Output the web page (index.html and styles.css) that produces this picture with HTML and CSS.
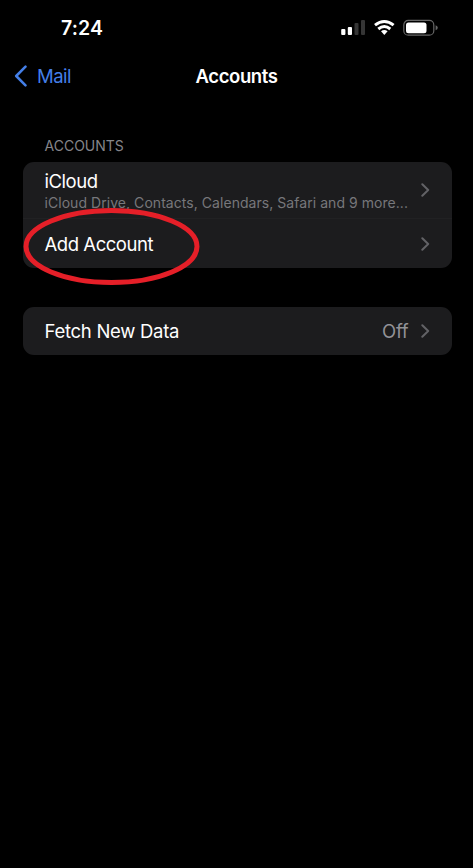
FILE: index.html
```html
<!DOCTYPE html>
<html lang="en">
<head>
<meta charset="utf-8">
<title>Accounts</title>
<link rel="stylesheet" href="styles.css">
</head>
<body>
<main class="screen">
  <div class="status">
    <span class="time">7:24</span>
    <svg class="indicators" width="98" height="20" viewBox="0 0 98 20">
      <g fill="#fff"><rect x="1.2" y="12" width="4.2" height="6" rx="1"/><rect x="7.8" y="10" width="4.2" height="8" rx="1"/></g>
      <g fill="#353535"><rect x="14.5" y="6" width="4" height="12" rx="1"/><rect x="21" y="3" width="4" height="15" rx="1"/></g>
      <g fill="none" stroke="#fff" stroke-width="3"><path d="M35 8.2Q44.3 .8 53.6 8.2"/><path d="M38.3 12Q44.3 7.1 50.3 12"/></g>
      <path fill="#fff" d="M41 14.3Q44.3 11.8 47.6 14.3L44.3 18Z"/>
      <rect x="63.8" y="3.4" width="30" height="14.8" rx="4.5" fill="none" stroke="#666" stroke-width="1.2"/>
      <rect x="66" y="5.4" width="20.5" height="10.8" rx="2.5" fill="#fff"/>
      <path fill="#666" d="M95.6 8.3Q97.8 9 97.8 10.8T95.6 13.3Z"/>
    </svg>
  </div>
  <header class="nav">
    <a class="back"><svg width="14" height="22" viewBox="0 0 14 22"><path d="M11.5 1.7 2.2 11l9.3 9.3"/></svg><span>Mail</span></a>
    <h1>Accounts</h1>
  </header>
  <h2>ACCOUNTS</h2>
  <section class="card accounts">
    <div class="row icloud">
      <div class="copy"><span class="label name">iCloud</span><span class="detail">iCloud Drive, Contacts, Calendars, Safari and 9 more...</span></div>
      <svg class="chevron" viewBox="0 0 9 14"><path d="m1.3 1.2 5.9 5.8-5.9 5.8"/></svg>
    </div>
    <div class="row add">
      <span class="label">Add Account</span>
      <svg class="chevron" viewBox="0 0 9 14"><path d="m1.3 1.2 5.9 5.8-5.9 5.8"/></svg>
    </div>
    <svg class="ring" width="178" height="80" viewBox="0 0 178 80"><ellipse cx="88.5" cy="39.5" rx="85.5" ry="36"/></svg>
  </section>
  <section class="card fetch">
    <div class="row">
      <span class="label data">Fetch New Data</span>
      <span class="value">Off</span>
      <svg class="chevron" viewBox="0 0 9 14"><path d="m1.3 1.2 5.9 5.8-5.9 5.8"/></svg>
    </div>
  </section>
</main>
</body>
</html>
```
FILE: styles.css
```css
* { box-sizing: border-box; }
body { margin: 0; background: #000; color: #fff; font-family: Inter, "Liberation Sans", sans-serif; }
.screen { height: 868px; overflow: hidden; background: #000; }
.status { height: 56px; padding: 17px 33px 0 61px; display: flex; justify-content: space-between; align-items: flex-start; }
.time { font-size: 19.5px; line-height: 23px; font-weight: 600; letter-spacing: .1px; }
.indicators { margin-right: 2px; }
.nav { height: 40px; padding: 0 14px; display: grid; grid-template-columns: 1fr auto 1fr; align-items: center; }
.back { display: flex; align-items: center; gap: 9px; color: #447fe8; font-size: 18.5px; letter-spacing: -.5px; }
.back path { fill: none; stroke: #447fe8; stroke-width: 2.5; stroke-linecap: round; stroke-linejoin: round; }
h1 { margin: 0; font-size: 18.5px; line-height: 24px; font-weight: 600; letter-spacing: -.4px; }
h2 { margin: 41px 0 0 44.5px; font-size: 14px; line-height: 18px; font-weight: 400; color: #85858a; }
.card { margin: 0 21.5px 0 22.5px; border-radius: 11px; background: #1c1c1e; }
.accounts { position: relative; margin-top: 7px; height: 105.5px; }
.row { display: flex; align-items: center; height: 48.5px; padding: 0 22px; }
.icloud { height: 57px; border-bottom: 1px solid #212123; }
.add { height: 49.5px; }
.copy { display: flex; flex-direction: column; flex: 1; padding-top: 2px; white-space: nowrap; }
.label { flex: 1; font-size: 18.5px; line-height: 24px; letter-spacing: -.45px; }
.data { letter-spacing: -.28px; }
.copy .label { line-height: 23px; }
.detail { font-size: 14px; line-height: 20px; letter-spacing: .05px; color: #77777b; }
.chevron { width: 9px; height: 14px; flex: none; }
.chevron path { fill: none; stroke: #626266; stroke-width: 2; stroke-linecap: round; stroke-linejoin: round; }
.ring { position: absolute; left: 0; top: 45px; }
.ring ellipse { fill: none; stroke: #e51f28; stroke-width: 5; }
.fetch { margin-top: 39px; }
.value { margin-right: 12px; color: #929297; font-size: 18.5px; letter-spacing: -.2px; }
```
